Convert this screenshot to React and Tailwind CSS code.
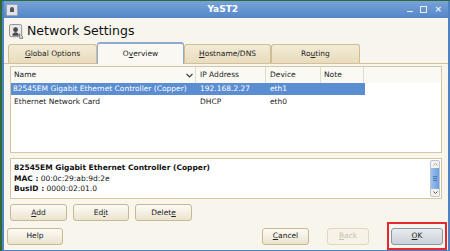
import React from 'react';

const font = { fontFamily: '"DejaVu Sans", "Liberation Sans", sans-serif' };

const U = ({ children }) => <span className="underline underline-offset-1">{children}</span>;

const YastIcon = ({ size = 15 }) => (
  <svg width={size} height={size} viewBox="0 0 16 16">
    <rect x="0.5" y="0.5" width="13" height="13" rx="2" fill="#e9e9e9" stroke="#8a8a8a" />
    <circle cx="7" cy="6" r="2.6" fill="#4a4a4a" />
    <path d="M3.5 12.5c0-2.2 1.6-3.6 3.5-3.6s3.5 1.4 3.5 3.6z" fill="#4a4a4a" />
    <path d="M11 10.5l4 3.5-1.5.4.9 1.4-.8.4-.9-1.4-1.1 1z" fill="#fff" stroke="#333" strokeWidth="0.6" />
  </svg>
);

const Btn = ({ children, className = '', disabled }) => (
  <div
    className={`h-[17px] flex items-center justify-center rounded-[3px] border text-[7.5px] ${
      disabled
        ? 'border-[#e2d8c2] bg-[#f6f2e8] text-[#c9c1ad]'
        : 'border-[#c9b893] bg-gradient-to-b from-[#fdfbf6] to-[#ebe3cf] text-[#222]'
    } ${className}`}
  >
    {children}
  </div>
);

const Tab = ({ children, active, w }) => (
  <div
    className={`${w} flex items-center justify-center text-[7.5px] text-[#222] rounded-t-[3px] border border-b-0 ${
      active
        ? 'h-[22px] bg-[#faf8f2] border-[#8fa9cf] border-t-2 -mb-px'
        : 'h-[19px] bg-gradient-to-b from-[#f4ebd6] to-[#e8dcbd] border-[#cfbd94]'
    }`}
  >
    {children}
  </div>
);

export default function App() {
  return (
    <div className="w-[450px] h-[251px] bg-[#2e6a33] pt-px pl-[2px] overflow-hidden" style={font}>
      <div className="w-[448px] h-[250px] flex flex-col bg-[#4f82c3] pb-px px-[2px]">
        {/* title bar */}
        <div className="h-[17px] flex items-center px-[2px] bg-gradient-to-b from-[#78a2d9] to-[#5487c7] text-white">
          <div className="w-[12px] h-[12px] bg-[#dfe3e8] border border-[#9aa5b3] rounded-[1px] flex items-center justify-center">
            <div className="w-[4px] h-[5px] bg-[#555] rounded-t-full" />
          </div>
          <div className="flex-1 text-center text-[9px] font-bold pl-[20px]">YaST2</div>
          <div className="flex items-center gap-[7px] pr-[4px] text-[9px] text-[#e6eef8]">
            <span className="w-[6px] h-px bg-[#e6eef8] mt-[4px]" />
            <span className="w-[7px] h-[7px] border border-[#e6eef8]" />
            <span className="font-bold leading-none">×</span>
          </div>
        </div>

        {/* body */}
        <div className="flex-1 bg-[#f8f5ed] flex flex-col">
          <div className="h-[20px] mt-[3px] flex items-center pl-[5px] gap-[3px]">
            <YastIcon />
            <span className="text-[12.5px] text-[#111]">Network Settings</span>
          </div>

          <div className="mt-[1px] flex items-end pl-[4px] border-b border-[#d2c29b]">
            <Tab w="w-[89px]"><span><U>G</U>lobal Options</span></Tab>
            <Tab w="w-[87px]" active><span>O<U>v</U>erview</span></Tab>
            <Tab w="w-[87px]"><span><U>H</U>ostname/DNS</span></Tab>
            <Tab w="w-[89px]"><span>Ro<U>u</U>ting</span></Tab>
          </div>

          <div className="flex-1 flex flex-col px-[6px] pt-[2px]">
            {/* table */}
            <div className="h-[87px] border border-[#d6c59d] bg-white flex flex-col text-[7.5px] text-[#222] whitespace-nowrap">
              <div className="h-[16px] flex items-center bg-[#fbf9f4]">
                <div className="w-[185px] pl-[3px] flex items-center justify-between pr-[2px] border-r border-[#e4dccb] h-full">
                  <span>Name</span>
                  <svg width="7" height="5" viewBox="0 0 7 5"><path d="M.5.8 3.5 3.8 6.5.8" stroke="#333" fill="none" strokeWidth="1.2" /></svg>
                </div>
                <div className="w-[70px] pl-[4px] border-r border-[#e4dccb] h-full flex items-center">IP Address</div>
                <div className="w-[55px] pl-[4px] border-r border-[#e4dccb] h-full flex items-center">Device</div>
                <div className="w-[43px] pl-[3px] border-r border-[#e4dccb] h-full flex items-center">Note</div>
              </div>
              <div className="h-[12px] w-[354px] flex items-center bg-[#5a8dd1] text-white">
                <div className="w-[185px] pl-[2px] overflow-hidden">82545EM Gigabit Ethernet Controller (Copper)</div>
                <div className="w-[70px] pl-[4px]">192.168.2.27</div>
                <div className="w-[55px] pl-[4px]">eth1</div>
              </div>
              <div className="h-[13px] w-[354px] flex items-center">
                <div className="w-[185px] pl-[3px]">Ethernet Network Card</div>
                <div className="w-[70px] pl-[4px]">DHCP</div>
                <div className="w-[55px] pl-[4px]">eth0</div>
              </div>
            </div>

            {/* details */}
            <div className="mt-[5px] h-[41px] border border-[#d6c59d] bg-white flex text-[7.5px] text-[#111]">
              <div className="flex-1 pl-[3px] pt-[4px] leading-[10.5px] whitespace-nowrap">
                <div className="font-bold">82545EM Gigabit Ethernet Controller (Copper)</div>
                <div><b>MAC :</b> 00:0c:29:ab:9d:2e</div>
                <div><b>BusID :</b> 0000:02:01.0</div>
              </div>
              <div className="w-[10px] my-px mr-px flex flex-col border border-[#b9c6d6] rounded-[2px] bg-[#f3f1ea]">
                <div className="h-[7px] flex items-center justify-center">
                  <svg width="5" height="3" viewBox="0 0 5 3"><path d="M.5 2.5 2.5.5 4.5 2.5" stroke="#9aa" fill="none" /></svg>
                </div>
                <div className="flex-1 bg-gradient-to-r from-[#9cc0ee] to-[#6f9fde] flex flex-col items-center justify-center gap-px">
                  <span className="w-[4px] h-px bg-[#4a78b5]" />
                  <span className="w-[4px] h-px bg-[#4a78b5]" />
                  <span className="w-[4px] h-px bg-[#4a78b5]" />
                </div>
                <div className="h-[7px] flex items-center justify-center">
                  <svg width="5" height="3" viewBox="0 0 5 3"><path d="M.5.5 2.5 2.5 4.5.5" stroke="#555" fill="none" /></svg>
                </div>
              </div>
            </div>

            <div className="mt-[5px] flex gap-[6px]">
              <Btn className="w-[57px]"><span><U>A</U>dd</span></Btn>
              <Btn className="w-[56px]"><span>Ed<U>i</U>t</span></Btn>
              <Btn className="w-[57px]"><span>Delet<U>e</U></span></Btn>
            </div>
          </div>

          <div className="h-[29px] flex items-center pl-[3px] pr-[1px] pt-px">
            <Btn className="w-[56px]">Help</Btn>
            <div className="flex-1" />
            <Btn className="w-[47px]"><span><U>C</U>ancel</span></Btn>
            <Btn className="w-[42px] ml-[18px]" disabled><span><U>B</U>ack</span></Btn>
            <div className="ml-[18px] w-[60px] h-[28px] border-2 border-[#e5292f] flex items-center justify-center">
              <div className="w-[52px] h-[17px] rounded-[3px] border border-[#8797ab] bg-gradient-to-b from-[#e9ecef] to-[#c9d0d8] flex items-center justify-center text-[7.5px] text-[#222]">
                <span><U>O</U>K</span>
              </div>
            </div>
          </div>
        </div>
      </div>
    </div>
  );
}
